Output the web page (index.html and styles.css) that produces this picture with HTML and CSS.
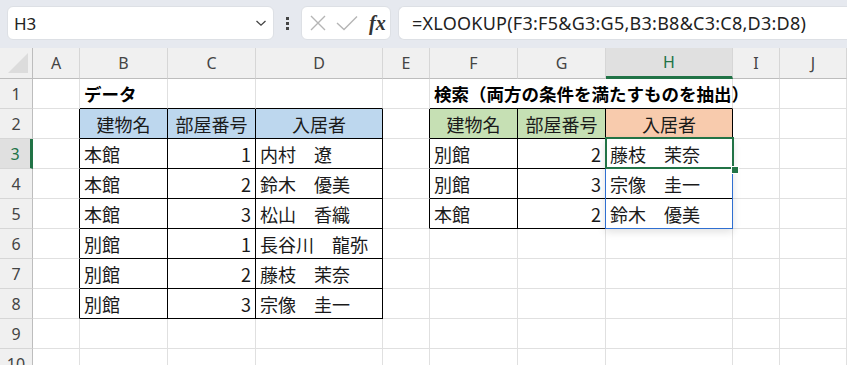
FILE: index.html
```html
<!DOCTYPE html>
<html lang="ja">
<head>
    <meta charset="UTF-8">
    <title>XLOOKUP 複数条件</title>
    <link rel="stylesheet" href="styles.css">
</head>
<body>
    <div class="toolbar">
        <div class="namebox">
            <span>H3</span>
            <svg width="12" height="8" viewBox="0 0 12 8"><path d="M1.5 2 L6 6.2 L10.5 2" fill="none" stroke="#444" stroke-width="1.3"/></svg>
        </div>
        <div class="dots"><i></i><i></i><i></i></div>
        <div class="fxbox">
            <svg width="18" height="18" viewBox="0 0 18 18"><path d="M2 2 L16 16 M16 2 L2 16" stroke="#b5b5b5" stroke-width="1.4" fill="none"/></svg>
            <svg width="22" height="18" viewBox="0 0 22 18"><path d="M1 9 L8 15.5 L21 2.5" stroke="#b5b5b5" stroke-width="1.4" fill="none"/></svg>
            <span class="fx">fx</span>
        </div>
        <div class="formula">=XLOOKUP(F3:F5&amp;G3:G5,B3:B8&amp;C3:C8,D3:D8)</div>
    </div>

    <div class="sheet">
        <!-- 列見出し -->
        <div class="hd corner"><svg width="22" height="22" viewBox="0 0 22 22"><path d="M21 1 L21 21 L1 21 Z" fill="#dcdcdc"/></svg></div>
        <div class="hd">A</div><div class="hd">B</div><div class="hd">C</div><div class="hd">D</div><div class="hd">E</div>
        <div class="hd">F</div><div class="hd">G</div><div class="hd sel">H</div><div class="hd">I</div><div class="hd">J</div>

        <!-- 1 -->
        <div class="rh">1</div>
        <div class="c"></div><div class="c tt title">データ</div><div class="c tt"></div><div class="c tt"></div><div class="c"></div>
        <div class="c tt title span3">検索（両方の条件を満たすものを抽出）</div>
        <div class="c"></div><div class="c"></div>

        <!-- 2 -->
        <div class="rh">2</div>
        <div class="c tl"></div><div class="c t blue ctr">建物名</div><div class="c t blue ctr">部屋番号</div><div class="c t blue ctr">入居者</div>
        <div class="c tl"></div><div class="c t green ctr">建物名</div><div class="c t green ctr">部屋番号</div><div class="c t peach ctr">入居者</div>
        <div class="c"></div><div class="c"></div>

        <!-- 3 -->
        <div class="rh sel">3</div>
        <div class="c tl"></div><div class="c t">本館</div><div class="c t num">1</div><div class="c t">内村　遼</div>
        <div class="c tl"></div><div class="c t">別館</div><div class="c t num">2</div>
        <div class="c t active-cell">藤枝　茉奈
            <div class="spill"></div>
            <div class="active"></div>
            <div class="handle"></div>
        </div>
        <div class="c"></div><div class="c"></div>

        <!-- 4 -->
        <div class="rh">4</div>
        <div class="c tl"></div><div class="c t">本館</div><div class="c t num">2</div><div class="c t">鈴木　優美</div>
        <div class="c tl"></div><div class="c t">別館</div><div class="c t num">3</div><div class="c t">宗像　圭一</div>
        <div class="c"></div><div class="c"></div>

        <!-- 5 -->
        <div class="rh">5</div>
        <div class="c tl"></div><div class="c t">本館</div><div class="c t num">3</div><div class="c t">松山　香織</div>
        <div class="c tl"></div><div class="c t">本館</div><div class="c t num">2</div><div class="c t">鈴木　優美</div>
        <div class="c"></div><div class="c"></div>

        <!-- 6 -->
        <div class="rh">6</div>
        <div class="c tl"></div><div class="c t">別館</div><div class="c t num">1</div><div class="c t">長谷川　龍弥</div>
        <div class="c"></div><div class="c"></div><div class="c"></div><div class="c"></div><div class="c"></div><div class="c"></div>

        <!-- 7 -->
        <div class="rh">7</div>
        <div class="c tl"></div><div class="c t">別館</div><div class="c t num">2</div><div class="c t">藤枝　茉奈</div>
        <div class="c"></div><div class="c"></div><div class="c"></div><div class="c"></div><div class="c"></div><div class="c"></div>

        <!-- 8 -->
        <div class="rh">8</div>
        <div class="c tl"></div><div class="c t">別館</div><div class="c t num">3</div><div class="c t">宗像　圭一</div>
        <div class="c"></div><div class="c"></div><div class="c"></div><div class="c"></div><div class="c"></div><div class="c"></div>

        <!-- 9 -->
        <div class="rh">9</div>
        <div class="c"></div><div class="c"></div><div class="c"></div><div class="c"></div><div class="c"></div>
        <div class="c"></div><div class="c"></div><div class="c"></div><div class="c"></div><div class="c"></div>

        <!-- 10 -->
        <div class="rh">10</div>
        <div class="c"></div><div class="c"></div><div class="c"></div><div class="c"></div><div class="c"></div>
        <div class="c"></div><div class="c"></div><div class="c"></div><div class="c"></div><div class="c"></div>
    </div>
</body>
</html>
```

FILE: styles.css
```css
body {
    margin: 0;
    width: 847px;
    height: 365px;
    overflow: hidden;
    background: #fff;
    font-family: "Noto Sans CJK JP", sans-serif;
    color: #1a1a1a;
}
.toolbar {
    height: 48px;
    box-sizing: border-box;
    background: #e6e9ef;
    display: flex;
    align-items: flex-start;
    padding: 6px 0 0 7px;
}
.namebox {
    width: 267px;
    height: 34px;
    box-sizing: border-box;
    background: #fff;
    border: 1px solid #dde0e5;
    border-radius: 6px;
    display: flex;
    align-items: center;
    justify-content: space-between;
    padding: 0 6px 0 6px;
    font-family: "Noto Sans", sans-serif;
    font-size: 17px;
    color: #222;
}
.dots {
    width: 27px;
    height: 34px;
    display: flex;
    flex-direction: column;
    align-items: center;
    justify-content: center;
    gap: 2px;
}
.dots i {
    width: 3px;
    height: 3px;
    background: #444;
}
.fxbox {
    width: 90px;
    height: 34px;
    box-sizing: border-box;
    background: #fff;
    border: 1px solid #dde0e5;
    border-radius: 6px;
    display: flex;
    align-items: center;
    padding: 0 0 0 7px;
    gap: 9px;
}
.fx {
    font-family: "Liberation Serif", serif;
    font-style: italic;
    font-weight: bold;
    font-size: 20px;
    color: #333;
    margin-left: 2px;
}
.formula {
    flex: 1;
    height: 34px;
    margin-left: 7px;
    box-sizing: border-box;
    background: #fff;
    border: 1px solid #dde0e5;
    border-right: none;
    border-radius: 6px 0 0 6px;
    display: flex;
    align-items: center;
    padding-left: 13px;
    font-family: "Noto Sans", sans-serif;
    font-size: 18px;
    letter-spacing: 0.25px;
    color: #222;
    white-space: nowrap;
}
.sheet {
    display: grid;
    grid-template-columns: 33px 47px 88px 88px 127px 47px 88px 88px 127px 47px 1fr;
    grid-template-rows: 31px repeat(10, 30px);
}
.hd {
    background: #f0f0f0;
    border-right: 1px solid #d6d6d6;
    border-bottom: 1px solid #bdbdbd;
    display: flex;
    align-items: center;
    justify-content: center;
    font-family: "Noto Sans", sans-serif;
    font-size: 16px;
    color: #444;
}
.hd.corner {
    border-right-color: #bdbdbd;
    align-items: flex-end;
    justify-content: flex-end;
    padding: 0 3px 4px 0;
}
.hd.sel {
    background: #e0e0e0;
    color: #217346;
    border-bottom: 3px solid #217346;
}
.rh {
    background: #f0f0f0;
    border-right: 1px solid #bdbdbd;
    border-bottom: 1px solid #d6d6d6;
    display: flex;
    align-items: center;
    justify-content: center;
    font-family: "Noto Sans", sans-serif;
    font-size: 16px;
    color: #444;
}
.rh.sel {
    background: #e0e0e0;
    color: #217346;
    border-right: 3px solid #217346;
}
.c {
    border-right: 1px solid #e0e0e0;
    border-bottom: 1px solid #e0e0e0;
    display: flex;
    align-items: center;
    padding: 0 4px;
    font-size: 18px;
    white-space: nowrap;
}
.c.t {
    border-color: #000;
}
.c.tt {
    border-bottom-color: #000;
}
.c.tl {
    border-right-color: #000;
}
.title {
    font-weight: bold;
    font-size: 17.5px;
    color: #000;
}
.span3 {
    grid-column: span 3;
}
.blue {
    background: #bdd7ee;
}
.green {
    background: #c6e0b4;
}
.peach {
    background: #f8cbad;
}
.ctr {
    justify-content: center;
}
.num {
    justify-content: flex-end;
}
.active-cell {
    position: relative;
}
.spill {
    position: absolute;
    left: -1px;
    top: -1px;
    width: 128px;
    height: 91px;
    box-sizing: border-box;
    border: 1px solid #2f6fd1;
    box-shadow: 0 3px 8px rgba(0, 0, 0, 0.12);
}
.active {
    position: absolute;
    left: -1px;
    top: -2px;
    width: 129px;
    height: 32px;
    box-sizing: border-box;
    border: 2px solid #217346;
}
.handle {
    position: absolute;
    left: 125px;
    top: 27px;
    width: 6px;
    height: 6px;
    background: #217346;
    border: 1px solid #fff;
}
```
